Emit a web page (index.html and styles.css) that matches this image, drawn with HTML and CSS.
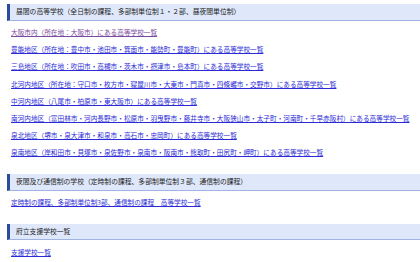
FILE: index.html
```html
<!DOCTYPE html>
<html>
<head>
    <title>高等学校一覧</title>
    <link rel="stylesheet" href="styles.css">
</head>
<body>
    <div class="section">
        <h2 class="section-title">昼間の高等学校（全日制の課程、多部制単位制１・２部、昼夜間単位制）</h2>
        <ul class="link-list">
            <li><a href="#" class="visited">大阪市内（所在地：大阪市）にある高等学校一覧</a></li>
            <li><a href="#">豊能地区（所在地：豊中市・池田市・箕面市・能勢町・豊能町）にある高等学校一覧</a></li>
            <li><a href="#">三島地区（所在地：吹田市・高槻市・茨木市・摂津市・島本町）にある高等学校一覧</a></li>
            <li><a href="#">北河内地区（所在地：守口市・枚方市・寝屋川市・大東市・門真市・四條畷市・交野市）にある高等学校一覧</a></li>
            <li><a href="#">中河内地区（八尾市・柏原市・東大阪市）にある高等学校一覧</a></li>
            <li><a href="#">南河内地区（富田林市・河内長野市・松原市・羽曳野市・藤井寺市・大阪狭山市・太子町・河南町・千早赤阪村）にある高等学校一覧</a></li>
            <li><a href="#">泉北地区（堺市・泉大津市・和泉市・高石市・忠岡町）にある高等学校一覧</a></li>
            <li><a href="#">泉南地区（岸和田市・貝塚市・泉佐野市・泉南市・阪南市・熊取町・田尻町・岬町）にある高等学校一覧</a></li>
        </ul>
    </div>

    <div class="section">
        <h2 class="section-title">夜間及び通信制の学校（定時制の課程、多部制単位制３部、通信制の課程）</h2>
        <ul class="link-list">
            <li><a href="#">定時制の課程、多部制単位制3部、通信制の課程　高等学校一覧</a></li>
        </ul>
    </div>

    <div class="section">
        <h2 class="section-title">府立支援学校一覧</h2>
        <ul class="link-list">
            <li><a href="#">支援学校一覧</a></li>
        </ul>
    </div>
</body>
</html>
```

FILE: styles.css
```css
body {
    font-family: "Noto Sans CJK JP", "Noto Sans", sans-serif;
    font-size: 6.65px;
    margin: 0;
    padding: 4px 0 0 0;
    background-color: #fff;
    color: #222;
}

.section {
    margin-bottom: 12.5px;
}

.section-title {
    margin: 0 0 0 7px;
    padding: 0 0 0 6px;
    font-size: 6.8px;
    font-weight: normal;
    line-height: 15.5px;
    color: #1a1a1a;
    background-color: #dfe8fa;
    border-left: 3px solid #2b4c9c;
    border-bottom: 1.5px solid #9fb4e2;
}

.link-list {
    list-style: none;
    margin: 3.4px 0 0 0;
    padding: 0 0 0 11px;
}

.link-list li {
    line-height: 17.2px;
    white-space: nowrap;
}

.link-list a {
    color: #2a2ad6;
    text-decoration: underline;
}

.link-list a.visited {
    color: #7a4a9e;
}
```
